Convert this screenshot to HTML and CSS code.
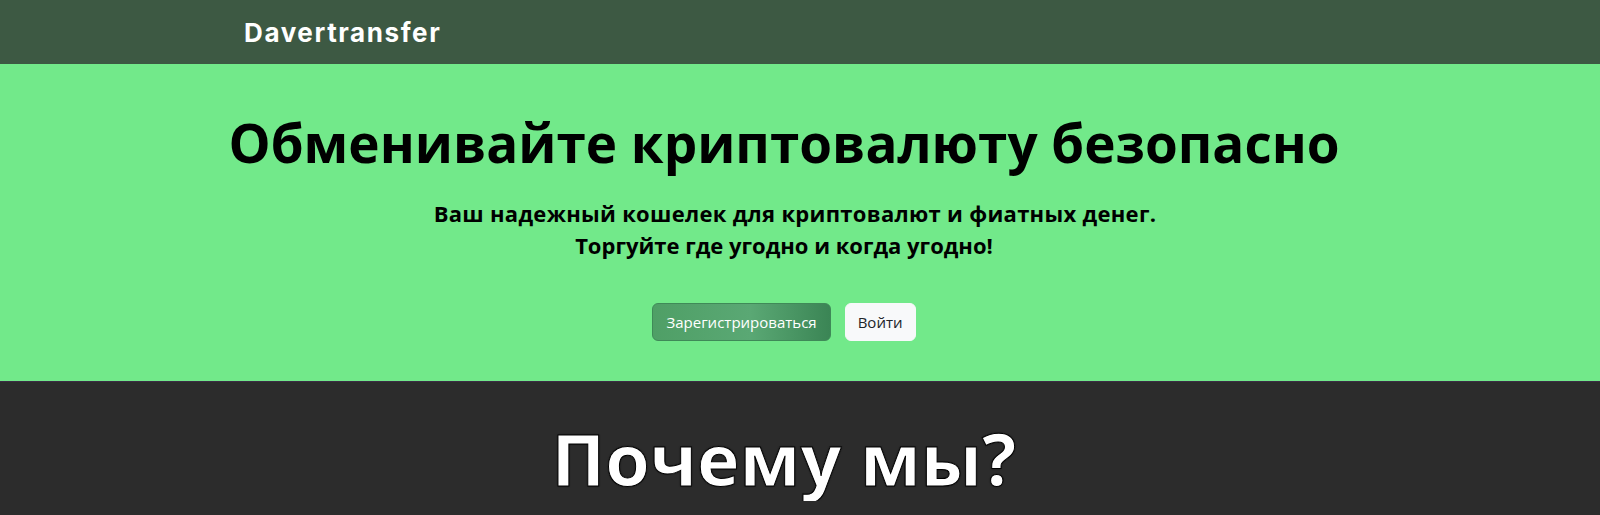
FILE: index.html
```html
<!DOCTYPE html>
<html lang="ru">
<head>
<meta charset="utf-8">
<title>Davertransfer</title>
<link rel="stylesheet" href="styles.css">
</head>
<body>
<header class="navbar">
  <div class="container">
    <a class="brand" href="#">Davertransfer</a>
  </div>
</header>
<section class="hero">
  <div class="hero-inner">
    <h1 class="hero-title">Обменивайте криптовалюту безопасно</h1>
    <p class="hero-lead"><span class="lead-first">Ваш надежный кошелек для криптовалют и фиатных денег.</span><br>Торгуйте где угодно и когда угодно!</p>
    <div class="hero-actions">
      <a class="btn btn-primary" href="#">Зарегистрироваться</a>
      <a class="btn btn-light" href="#">Войти</a>
    </div>
  </div>
</section>
<section class="why">
  <h2 class="why-title">Почему мы?</h2>
</section>
</body>
</html>
```
FILE: styles.css
```css
* { box-sizing: border-box; }
html, body { margin: 0; padding: 0; }
body {
  font-family: "Open Sans", "Noto Sans", sans-serif;
  background: #2c2c2c;
  color: #000;
}
.navbar {
  background: #3d5943;
  height: 64px;
  display: flex;
  align-items: center;
}
.container {
  width: 1140px;
  margin: 0 auto;
  padding: 0 14px;
}
.brand {
  color: #fff;
  text-decoration: none;
  font-family: "Inter", "Lato", sans-serif;
  font-weight: 700;
  font-size: 26px;
  letter-spacing: 1.6px;
}
.hero {
  background: #72e98a;
  height: 318px;
  border-bottom: 1px solid #3b2d45;
}
.hero-inner {
  padding-right: 32px;
  text-align: center;
  padding-top: 47px;
}
.hero-title {
  margin: 0;
  font-size: 53px;
  font-weight: 700;
  line-height: 1.2;
}
.hero-lead {
  margin: 22px 0 0;
  font-size: 22px;
  font-weight: 700;
  line-height: 32px;
}
.lead-first {
  padding-left: 22px;
  letter-spacing: 0.3px;
}
.hero-actions {
  margin-top: 42px;
  display: flex;
  justify-content: center;
  gap: 14px;
}
.btn {
  display: inline-flex;
  align-items: center;
  height: 38px;
  padding: 0 12px;
  border-radius: 6px;
  font-size: 15px;
  text-decoration: none;
  border: 1px solid transparent;
}
.btn-primary {
  padding: 0 13px;
  color: #fff;
  background: linear-gradient(90deg, #4f9f66 0%, #5aa874 55%, #3b8555 100%);
  border-color: #3f8a58;
}
.btn-light {
  color: #212529;
  background: #f8f9fa;
  border-color: #f8f9fa;
}
.why {
  text-align: center;
  padding-right: 32px;
}
.why-title {
  margin: 0;
  padding-top: 33px;
  font-size: 72px;
  font-weight: 700;
  line-height: 1.2;
  color: #fff;
  -webkit-text-stroke: 1px #000;
  text-shadow: 0 0 2px #000;
}
```
